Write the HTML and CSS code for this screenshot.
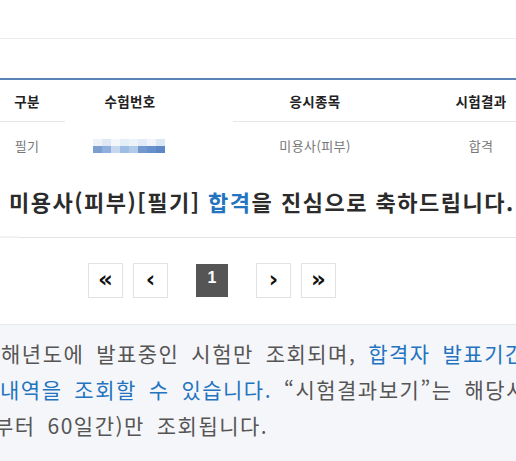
FILE: index.html
```html
<!DOCTYPE html>
<html lang="ko">
<head>
<meta charset="utf-8">
<link rel="stylesheet" href="styles.css">
</head>
<body>
<div class="page">
  <div class="topbar"></div>
  <div class="spacer"></div>
  <div class="table">
    <div class="row head">
      <div class="cell">구분</div>
      <div class="cell">수험번호</div>
      <div class="cell">응시종목</div>
      <div class="cell">시험결과</div>
    </div>
    <div class="divider"><span class="seg a"></span><span class="seg gap"></span><span class="seg b"></span></div>
    <div class="row body">
      <div class="cell">필기</div>
      <div class="cell">
        <div class="blur">
          <div class="brow top">
            <i style="background:#eef3fa"></i><i style="background:#dfe9f6"></i><i style="background:#f3f6fb"></i><i style="background:#e6eef8"></i><i style="background:#eef3fa"></i><i style="background:#e2ebf7"></i><i style="background:#f0f4fa"></i><i style="background:#dce7f5"></i>
          </div>
          <div class="brow bot">
            <i style="background:#7c9fd0"></i><i style="background:#8fb0dc"></i><i style="background:#c6d8ef"></i><i style="background:#9ebde5"></i><i style="background:#b3cbeb"></i><i style="background:#7298cf"></i><i style="background:#6690cb"></i><i style="background:#5c88c7"></i>
          </div>
        </div>
      </div>
      <div class="cell">미용사(피부)</div>
      <div class="cell">합격</div>
    </div>
  </div>
  <h2 class="congrats">미용사(피부)[필기] <span class="blue">합격</span>을 진심으로 축하드립니다.'</h2>
  <div class="rule"><span class="stub"></span><span class="line"></span></div>
  <nav class="pager">
    <span class="pbtn">&laquo;</span>
    <span class="pbtn">&lsaquo;</span>
    <span class="pbtn active">1</span>
    <span class="pbtn">&rsaquo;</span>
    <span class="pbtn">&raquo;</span>
  </nav>
  <div class="notice">
    <div class="ln l1">해년도에 발표중인 시험만 조회되며, <span class="blue">합격자 발표기간</span></div>
    <div class="ln l2"><span class="blue">내역을 조회할 수 있습니다.</span> “시험결과보기”는 해당시</div>
    <div class="ln l3">부터 60일간)만 조회됩니다.</div>
  </div>
</div>
</body>
</html>
```

FILE: styles.css
```css
* { box-sizing: border-box; }
html, body { margin: 0; padding: 0; background: #fff; }
body {
  font-family: "Noto Sans CJK KR", "Noto Sans", "Liberation Sans", sans-serif;
  color: #333;
}
.page { width: 516px; height: 461px; overflow: hidden; }
.topbar { height: 39px; border-bottom: 1px solid #ececec; }
.spacer { height: 39px; }
.table { border-top: 2px solid #5a84b6; overflow: hidden; }
.row { display: grid; grid-template-columns: 54px 152px 218px 114px; width: 538px; }
.row .cell { display: flex; align-items: center; justify-content: center; white-space: nowrap; }
.head { height: 41px; font-size: 13.5px; font-weight: 700; color: #222; letter-spacing: 0.3px; }
.divider { display: flex; height: 1px; }
.divider .seg { display: block; height: 1px; }
.divider .a { width: 65px; background: #e6e6e6; }
.divider .gap { width: 168px; }
.divider .b { flex: 1; background: #e6e6e6; }
.body { height: 47px; font-size: 13px; color: #777; letter-spacing: 0.4px; }
.blur { display: flex; flex-direction: column; width: 72px; height: 14px; margin-left: -2px; }
.brow { display: flex; flex: 1; }
.brow i { flex: 1; display: block; }
.congrats {
  margin: 0; padding: 0 0 0 9px; height: 67px; line-height: 64px;
  font-size: 22px; font-weight: 700; color: #2b2b2b; white-space: nowrap;
  letter-spacing: 1.5px;
}
.blue { color: #2374c0; }
.rule { display: flex; height: 2px; align-items: flex-start; }
.rule .stub { width: 19px; height: 2px; background: #f2f2f2; }
.rule .line { flex: 1; height: 1px; margin-top: 1px; background: #e3e3e3; }
.pager { display: flex; height: 86px; padding: 25px 0 0 88px; align-items: flex-start; }
.pbtn {
  display: flex; align-items: center; justify-content: center;
  width: 35px; height: 35px; border: 1px solid #e2e2e2; background: #fff;
  font-family: "DejaVu Sans", sans-serif; font-weight: 700; font-size: 23px; color: #111;
  margin-right: 10px; line-height: 1; padding-bottom: 2px;
}
.pbtn:nth-child(2) { margin-right: 28px; }
.pbtn.active {
  width: 32px; height: 33px; margin-top: 1px; margin-right: 28px;
  background: #555; border-color: #555; color: #fff; font-size: 16px;
  font-family: "Liberation Sans", sans-serif; padding-bottom: 5px;
}
.notice {
  border-top: 1px solid #e6e8ec; background: #f5f6f9; height: 200px;
  padding-top: 11px; font-size: 21px; color: #555; white-space: nowrap;
  letter-spacing: 1.5px; word-spacing: 4.5px;
}
.ln { height: 36px; line-height: 34px; }
.l1 { padding-left: 1px; }
.l2 { padding-left: 0; }
.l3 { margin-left: -6px; }
```
